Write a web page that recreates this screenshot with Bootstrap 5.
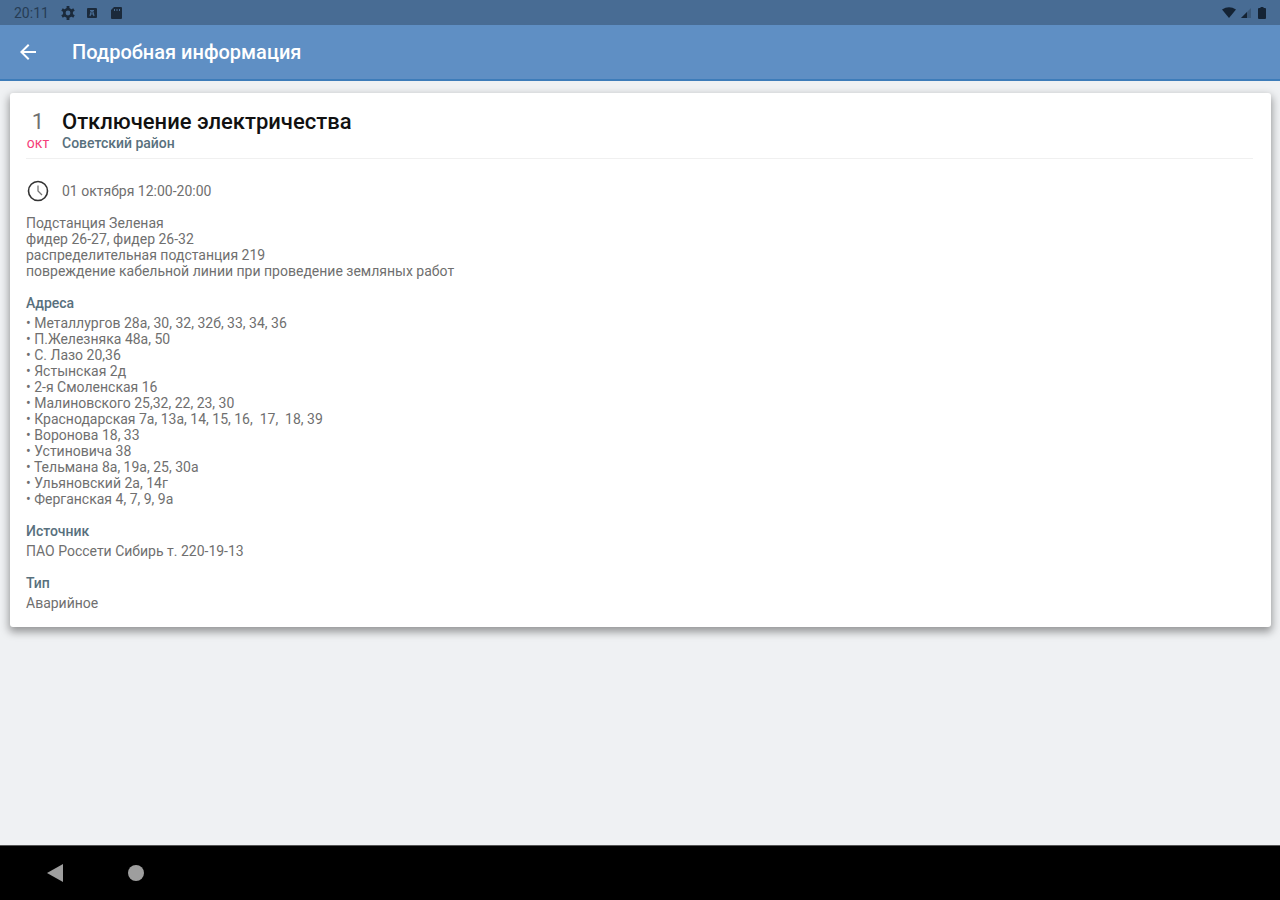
<!DOCTYPE html>
<html lang="ru">
<head>
<meta charset="utf-8">
<meta name="viewport" content="width=device-width, initial-scale=1">
<title>Подробная информация</title>
<link href="https://cdn.jsdelivr.net/npm/bootstrap@5.3.0/dist/css/bootstrap.min.css" rel="stylesheet">
<style>
  body { font-family: Roboto, "Noto Sans", sans-serif; font-size: 14px; line-height: 16px; background: #eff1f3; color: #6f6f6f; }
  .status { height: 25px; background: #486c94; color: #263c55; padding: 0 12px 0 14px; }
  .status-icons { gap: 10px; }
  .appbar { height: 56px; background: #5f8fc4; border-bottom: 2px solid #3d7cb9; padding: 0 12px; }
  .appbar h1 { font-size: 20px; line-height: 24px; }
  .back { width: 32px; height: 32px; margin-right: 28px; }
  .content-area { padding: 12px 9px 16px 10px; }
  .info { border: 0; border-radius: 3px; color: inherit; box-shadow: 0 4px 8px 1px rgba(0,0,0,.38); }
  .info .card-body { padding: 16px; }
  .lead-col { width: 24px; margin-right: 12px; text-align: center; flex: none; }
  .day { font-size: 22px; line-height: 26px; }
  .month { color: #f5407a; }
  .event-title { font-size: 22px; line-height: 26px; color: #111; }
  .heading { font-size: 14px; line-height: 16px; color: #58707d; font-weight: 500; }
  .event-head { padding-bottom: 7px; border-bottom: 1px solid #f0f0f0; margin-right: 2px; }
  .addresses li::before { content: "• "; }
  .sysnav { height: 55px; background: #000; border-top: 1px solid #555; padding: 0 44px; gap: 56px; }
</style>
</head>
<body class="d-flex flex-column min-vh-100">
<div class="status d-flex align-items-center justify-content-between">
  <div class="d-flex align-items-center">
    <span class="me-2 pe-1">20:11</span>
    <div class="status-icons d-flex align-items-center">
      <svg width="14" height="14" viewBox="0 0 14 14" aria-hidden="true"><circle cx="7" cy="7" r="3.7" fill="none" stroke="#1b2a3b" stroke-width="2.6"/><path d="M7 0v3M7 11v3M1 3.5l2.5 1.5M10.5 9l2.5 1.5M1 10.500l2.500-1.500M10.500 5l2.500-1.500" stroke="#1b2a3b" stroke-width="2.800"/></svg>
      <svg width="14" height="14" viewBox="0 0 14 14" aria-hidden="true"><rect x="2" y="2" width="10" height="10" rx="1" fill="#1b2a3b"/><path d="M5 10l1.300-5h1.400L9 10M5.500 8h3M5 4.500h4" fill="none" stroke="#486c94" stroke-width="1.200"/></svg>
      <svg width="14" height="14" viewBox="0 0 14 14" aria-hidden="true"><path d="M5 1h7q1 0 1 1v10q0 1-1 1H3q-1 0-1-1V4z" fill="#1b2a3b"/><path d="M5.500 3v2M8 3v2M10.500 3v2" stroke="#486c94"/></svg>
    </div>
  </div>
  <div class="d-flex align-items-center gap-1">
    <svg width="14" height="12" viewBox="0 0 14 12" aria-hidden="true"><path d="M0 2.500Q7-2 14 2.500L7 11z" fill="#142334"/></svg>
    <svg width="12" height="12" viewBox="0 0 12 12" aria-hidden="true"><path d="M1 11L11 1v10z" fill="#3a5879"/><path d="M1 11l6-6v6z" fill="#142334"/></svg>
    <svg width="12" height="14" viewBox="0 0 12 14" aria-hidden="true"><path d="M4.500 1h3v1H9q1 0 1 1v9q0 1-1 1H3q-1 0-1-1V3q0-1 1-1h1.500z" fill="#142334"/></svg>
  </div>
</div>
<header class="appbar d-flex align-items-center text-white">
  <button type="button" class="back btn p-0 border-0 text-white d-flex align-items-center justify-content-center" aria-label="Назад">
    <svg width="24" height="24" viewBox="0 0 24 24" fill="currentColor"><path d="M20 11H7.830l5.590-5.590L12 4l-8 8 8 8 1.410-1.410L7.830 13H20z"/></svg>
  </button>
  <h1 class="m-0 fw-medium">Подробная информация</h1>
</header>
<main class="content-area flex-grow-1">
  <article class="card info">
    <div class="card-body">
      <div class="event-head">
        <div class="d-flex align-items-center">
          <div class="lead-col day">1</div>
          <h2 class="event-title m-0">Отключение электричества</h2>
        </div>
        <div class="d-flex align-items-center">
          <div class="lead-col month">окт</div>
          <div class="heading">Советский район</div>
        </div>
      </div>
      <div class="d-flex align-items-center mt-3 pt-1 mb-2 pb-1">
        <div class="lead-col"><svg class="d-block" width="24" height="24" viewBox="0 0 24 24" fill="none" stroke="#333" stroke-width="1.600" aria-hidden="true"><circle cx="12" cy="12" r="9.500"/><path d="M12 6.500V12l4 4" stroke="#777" stroke-width="1.300"/></svg></div>
        <time>01 октября 12:00-20:00</time>
      </div>
      <p class="mb-3">Подстанция Зеленая<br>фидер 26-27, фидер 26-32<br>распределительная подстанция 219<br>повреждение кабельной линии при проведение земляных работ</p>
      <h3 class="heading mb-1">Адреса</h3>
      <ul class="addresses list-unstyled mb-3">
        <li>Металлургов 28а, 30, 32, 32б, 33, 34, 36</li>
        <li>П.Железняка 48а, 50</li>
        <li>С. Лазо 20,36</li>
        <li>Ястынская 2д</li>
        <li>2-я Смоленская 16</li>
        <li>Малиновского 25,32, 22, 23, 30</li>
        <li>Краснодарская 7а, 13а, 14, 15, 16,&nbsp; 17,&nbsp; 18, 39</li>
        <li>Воронова 18, 33</li>
        <li>Устиновича 38</li>
        <li>Тельмана 8а, 19а, 25, 30а</li>
        <li>Ульяновский 2а, 14г</li>
        <li>Ферганская 4, 7, 9, 9а</li>
      </ul>
      <h3 class="heading mb-1">Источник</h3>
      <p class="mb-3">ПАО Россети Сибирь т. 220-19-13</p>
      <h3 class="heading mb-1">Тип</h3>
      <p class="mb-0">Аварийное</p>
    </div>
  </article>
</main>
<nav class="sysnav d-flex align-items-center" aria-label="Системная навигация">
  <button type="button" class="btn p-0 border-0 d-flex" aria-label="Назад"><svg width="24" height="24" viewBox="0 0 24 24"><path d="M3 12L19 3v18z" fill="#9e9e9e"/></svg></button>
  <button type="button" class="btn p-0 border-0 d-flex" aria-label="Домой"><svg width="24" height="24" viewBox="0 0 24 24"><circle cx="12" cy="12" r="8" fill="#9e9e9e"/></svg></button>
</nav>
<script src="https://cdn.jsdelivr.net/npm/bootstrap@5.3.0/dist/js/bootstrap.bundle.min.js"></script>
</body>
</html>
